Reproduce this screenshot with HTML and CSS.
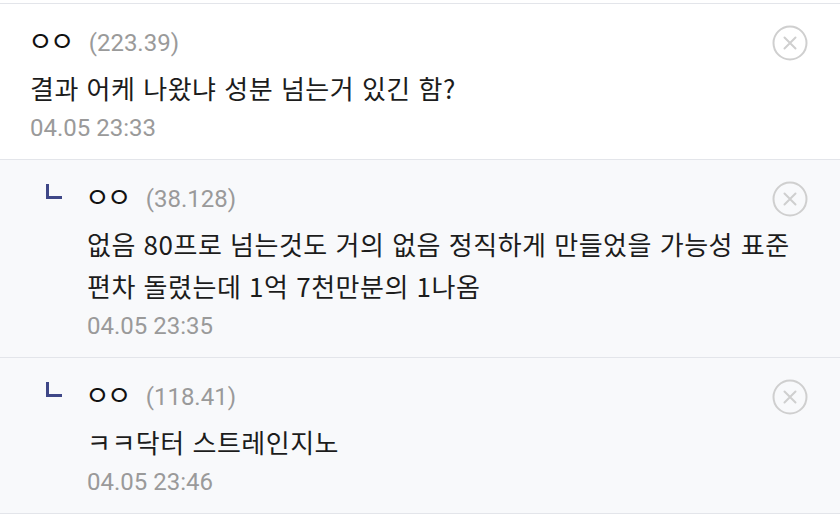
FILE: index.html
```html
<!DOCTYPE html>
<html lang="ko">
<head>
<meta charset="utf-8">
<link rel="stylesheet" href="styles.css">
</head>
<body>
<div class="list">
  <div class="comment">
    <div class="content">
      <div class="head"><span class="name">ㅇㅇ</span><span class="ip">(223.39)</span></div>
      <button class="del" aria-label="삭제"><svg viewBox="0 0 36 36" width="36" height="36"><circle cx="18" cy="18" r="16.5" fill="none" stroke="#cfcfcf" stroke-width="2"/><path d="M12.5 12.5 L23.5 23.5 M23.5 12.5 L12.5 23.5" stroke="#cfcfcf" stroke-width="2" stroke-linecap="round"/></svg></button>
      <div class="text">결과 어케 나왔냐 성분 넘는거 있긴 함?</div>
      <div class="date">04.05 23:33</div>
    </div>
  </div>
  <div class="comment reply">
    <span class="mark"></span>
    <div class="content">
      <div class="head"><span class="name">ㅇㅇ</span><span class="ip">(38.128)</span></div>
      <button class="del" aria-label="삭제"><svg viewBox="0 0 36 36" width="36" height="36"><circle cx="18" cy="18" r="16.5" fill="none" stroke="#cfcfcf" stroke-width="2"/><path d="M12.5 12.5 L23.5 23.5 M23.5 12.5 L12.5 23.5" stroke="#cfcfcf" stroke-width="2" stroke-linecap="round"/></svg></button>
      <div class="text">없음 80프로 넘는것도 거의 없음 정직하게 만들었을 가능성 표준 편차 돌렸는데 1억 7천만분의 1나옴</div>
      <div class="date">04.05 23:35</div>
    </div>
  </div>
  <div class="comment reply">
    <span class="mark"></span>
    <div class="content">
      <div class="head"><span class="name">ㅇㅇ</span><span class="ip">(118.41)</span></div>
      <button class="del" aria-label="삭제"><svg viewBox="0 0 36 36" width="36" height="36"><circle cx="18" cy="18" r="16.5" fill="none" stroke="#cfcfcf" stroke-width="2"/><path d="M12.5 12.5 L23.5 23.5 M23.5 12.5 L12.5 23.5" stroke="#cfcfcf" stroke-width="2" stroke-linecap="round"/></svg></button>
      <div class="text">ㅋㅋ닥터 스트레인지노</div>
      <div class="date">04.05 23:46</div>
    </div>
  </div>
</div>
</body>
</html>
```
FILE: styles.css
```css
* { box-sizing: border-box; }
html, body { margin: 0; padding: 0; background: #ffffff; }
body {
  font-family: Roboto, "Noto Sans CJK KR", sans-serif;
  color: #1c1c1c;
  padding-top: 3px;
}
.list { border-top: 1px solid #e3e5ea; }
.comment {
  display: flex;
  align-items: flex-start;
  background: #ffffff;
  border-bottom: 1px solid #e3e5ea;
  padding: 21px 32px 16px 30px;
}
.comment.reply {
  background: #f8f9fb;
  padding-left: 46px;
}
.mark {
  flex: none;
  width: 16px;
  height: 15px;
  margin-top: 3px;
  margin-right: 25px;
  border-left: 3px solid #3f4787;
  border-bottom: 3px solid #3f4787;
}
.content {
  flex: 1;
  min-width: 0;
  display: grid;
  grid-template-columns: 1fr 36px;
  grid-template-rows: 30px auto auto;
}
.head {
  grid-column: 1;
  grid-row: 1;
  height: 30px;
  line-height: 30px;
  font-size: 24px;
  white-space: nowrap;
}
.name {
  font-family: "Noto Sans CJK KR", sans-serif;
  font-size: 27px;
  letter-spacing: -3px;
  color: #111;
  margin-left: -2px;
}
.ip { color: #9a9a9a; margin-left: 17px; font-size: 24px; }
.del {
  grid-column: 2;
  grid-row: 1;
  align-self: start;
  width: 36px;
  height: 36px;
  padding: 0;
  margin: 0 0 -6px 0;
  border: 0;
  background: none;
}
.del svg { display: block; }
.text {
  grid-column: 1 / -1;
  grid-row: 2;
  margin-top: 12px;
  font-family: "Noto Sans CJK KR", Roboto, sans-serif;
  font-size: 26px;
  letter-spacing: 0.5px;
  line-height: 42px;
  color: #1c1c1c;
  word-break: keep-all;
}
.date {
  grid-column: 1 / -1;
  grid-row: 3;
  margin-top: 4px;
  height: 30px;
  line-height: 30px;
  font-size: 24px;
  color: #9a9a9a;
}
```
